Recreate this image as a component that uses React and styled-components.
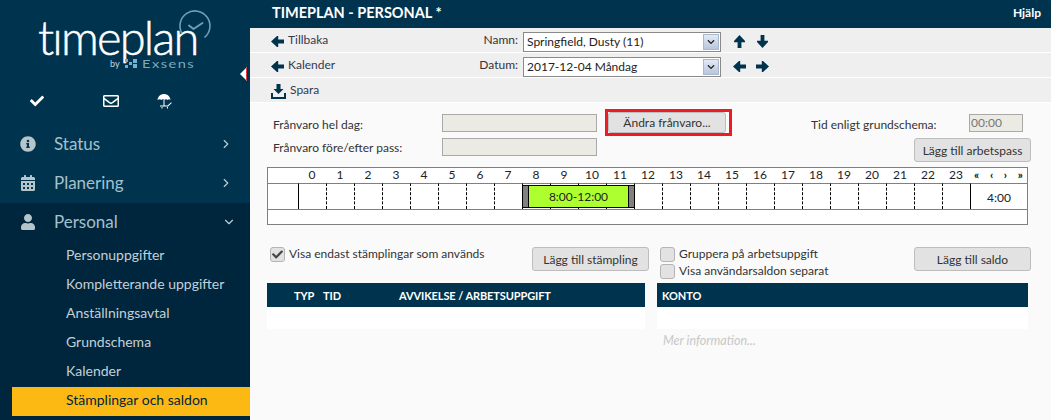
import React from "react";
import styled, { createGlobalStyle } from "styled-components";
import { FaCheck, FaRegEnvelope, FaInfoCircle, FaCalendarAlt, FaUser, FaChevronDown } from "react-icons/fa";
import { ChevronRight, ChevronDown } from "lucide-react";

const GlobalStyle = createGlobalStyle`
  html, body { margin: 0; padding: 0; background: #fafafa; }
  body { font-family: Lato, "Open Sans", sans-serif; color: #333; }
  * { box-sizing: border-box; }
`;

const Page = styled.div`
  position: relative;
  display: flex;
  width: 1051px;
  height: 420px;
  overflow: hidden;
`;

/* sidebar */
const Sidebar = styled.aside`
  display: flex;
  flex-direction: column;
  flex: 0 0 250px;
  background: #00344e;
`;

const Brand = styled.div`
  position: relative;
  height: 87px;
`;

const Wordmark = styled.div`
  position: absolute;
  left: 38px;
  top: 22px;
  font-size: 47px;
  line-height: 30px;
  font-weight: 300;
  color: #fff;
  letter-spacing: -1.8px;
  -webkit-text-stroke: 0.5px #fff;
`;

const ByLine = styled.div`
  position: absolute;
  left: 110px;
  top: 58px;
  display: flex;
  align-items: center;
  gap: 5px;
  height: 11px;
  font-size: 9px;
  color: #c5d5dd;
`;

const Exsens = styled.span`
  font-size: 12px;
  letter-spacing: 1.2px;
  color: #7fa8bd;
  transform: scaleX(1.22);
  transform-origin: left center;
`;

const ClockMark = styled.svg`
  position: absolute;
  left: 178px;
  top: 9px;
`;

const QuickIcons = styled.div`
  display: grid;
  grid-template-columns: 73px 54px 30px;
  align-items: center;
  height: 38px;
  padding: 0 0 10px 30px;
  color: #fff;
`;

const NavItem = styled.div`
  display: flex;
  align-items: center;
  height: 39px;
  padding: 0 16px 2px 20px;
  font-size: 17px;
  color: #a4c0cd;
  background: ${(p) => (p.$dark ? "#00263e" : "transparent")};
  > svg { flex: 0 0 16px; color: #b6c4cb; font-size: 16px; }
`;

const NavLabel = styled.span`
  flex: 1;
  margin-left: 18px;
`;

const NavChevron = styled.span`
  display: flex;
  color: #b9ced8;
  margin-right: ${(p) => (p.$open ? "-2px" : "1px")};
`;

const SubMenu = styled.div`
  flex: 1;
  background: #00263e;
  padding-left: 12px;
`;

const SubItem = styled.div`
  height: 29px;
  padding-left: 54px;
  font-size: 14px;
  line-height: 26px;
  color: ${(p) => (p.$active ? "#00263e" : "#c3d0d6")};
  background: ${(p) => (p.$active ? "#fdb913" : "transparent")};
`;

const CollapseTab = styled.div`
  position: absolute;
  left: 240px;
  top: 67px;
  width: 7px;
  height: 14px;
  background: #fff;
  clip-path: polygon(0 50%, 100% 0, 100% 100%);
  border-right: 1px solid #e03a3a;
`;

/* main area */
const Main = styled.main`
  flex: 1;
  min-width: 0;
  display: flex;
  flex-direction: column;
`;

const TopBar = styled.header`
  display: flex;
  justify-content: space-between;
  align-items: center;
  height: 28px;
  padding: 0 10px 3px 22px;
  background: #00344e;
  color: #fff;
`;

const PageTitle = styled.div`
  font-size: 14.5px;
  font-weight: 700;
`;

const HelpLink = styled.div`
  font-size: 12px;
  font-weight: 700;
`;

const ToolRow = styled.div`
  display: grid;
  grid-template-columns: 200px 47px 203px auto;
  align-items: center;
  height: 25px;
  padding-left: 21px;
  background: #efefef;
  border-bottom: 1px solid #fff;
`;

const ToolLink = styled.div`
  display: flex;
  align-items: center;
  gap: 4px;
  font-size: 12px;
  color: #333a50;
  svg { margin-top: 3px; }
  span { margin-bottom: 2px; }
`;

const ToolLabel = styled.div`
  margin-bottom: 2px;
  text-align: right;
  font-size: 12px;
  color: #333;
`;

const SelectBox = styled.div`
  display: flex;
  align-items: center;
  justify-content: space-between;
  height: 20px;
  margin: 3px 0 0 5px;
  padding: 1px 1px 1px 3px;
  background: #fff;
  border: 1px solid #8a8a8a;
  font-size: 12px;
  color: #222;
`;

const SelectArrow = styled.span`
  display: flex;
  align-items: center;
  justify-content: center;
  width: 16px;
  height: 16px;
  background: linear-gradient(#e3e9f4, #b9c6dc);
  border: 1px solid #a9b7cf;
  font-size: 8px;
  color: #222;
`;

const ArrowPair = styled.div`
  display: flex;
  gap: 10px;
  padding: 3px 0 0 12px;
`;

const Content = styled.div`
  flex: 1;
  padding: 6px 20px 0 17px;
  background: #fafafa;
`;

const FormGrid = styled.div`
  display: grid;
  grid-template-columns: 175px 155px 8px 127px 1fr;
  grid-template-rows: 27px 31px;
  height: 58px;
`;

const FieldLabel = styled.div`
  padding: ${(p) => (p.$second ? "4px" : "8px")} 0 0 6px;
  font-size: 12px;
  line-height: 16px;
  color: #333;
`;

const ReadonlyInput = styled.div`
  width: ${(p) => p.$width || "155px"};
  height: 18px;
  margin-top: ${(p) => p.$top || "5px"};
  background: #ebebe4;
  border: 1px solid #a9a9a9;
  font-size: 12px;
  line-height: 15px;
  color: #777;
  padding-left: 1px;
`;

const Highlight = styled.div`
  padding: 0 1px 0 0;
  height: 27px;
  border: 3px solid #ed1c24;
  display: flex;
`;

const Button = styled.button`
  width: ${(p) => p.$width || "117px"};
  height: ${(p) => p.$height || "24px"};
  padding: 0;
  background: #e2e2e2;
  border: 1px solid #bdbdbd;
  border-radius: 3px;
  font-family: inherit;
  font-size: 12px;
  color: #333;
`;

const RightCol = styled.div`
  display: flex;
  justify-content: space-between;
  padding: 8px 8px 0 79px;
  font-size: 12px;
  line-height: 16px;
  color: #333;
  > div { margin-top: -3px; }
`;

const RightButton = styled.div`
  display: flex;
  justify-content: flex-end;
  padding-top: 2px;
`;

const Timeline = styled.div`
  width: 761px;
  height: 58px;
  margin-bottom: 22px;
  border: 1px solid #808080;
  background: #fff;
`;

const TimeGrid = styled.div`
  display: grid;
  grid-template-columns: 30px repeat(24, 28px) 1fr;
  grid-template-rows: 15px 26px;
  border-bottom: 1px solid #808080;
`;

const HourLabel = styled.div`
  grid-row: 1;
  text-align: center;
  font-size: 12px;
  line-height: 14px;
  color: #222;
`;

const Pager = styled.div`
  grid-row: 1;
  display: flex;
  justify-content: space-between;
  padding: 0 4px;
  font-size: 11px;
  line-height: 14px;
  font-weight: 900;
  color: #222;
`;

const Slot = styled.div`
  grid-row: 2;
  grid-column: ${(p) => p.$col};
  border-top: 1px solid #808080;
  border-left: ${(p) => (p.$line === "none" ? "none" : `1px ${p.$line} #000`)};
  text-align: center;
  font-size: 12px;
  line-height: 28px;
  color: #222;
`;

const Shift = styled.div`
  grid-row: 2;
  grid-column: 10 / span 4;
  z-index: 1;
  display: flex;
  margin: 2px -1px 1px 0;
  padding: 0 5px;
  border: 1px solid #000;
  background: #808080;
`;

const ShiftBody = styled.div`
  flex: 1;
  background: #adff2f;
  border: solid #000;
  border-width: 0 1px;
  text-align: center;
  font-size: 12px;
  line-height: 22px;
  color: #222;
`;

const Panels = styled.div`
  display: grid;
  grid-template-columns: 378px 371px;
  column-gap: 12px;
`;

const OptionRow = styled.div`
  display: flex;
  justify-content: space-between;
  height: 36px;
  width: ${(p) => p.$width || "auto"};
`;

const OptionList = styled.div`
  display: flex;
  flex-direction: column;
  gap: 2px;
  padding-left: 3px;
`;

const CheckOption = styled.label`
  display: flex;
  gap: 4px;
  font-size: 12px;
  line-height: 14px;
  color: #333;
`;

const CheckBox = styled.span`
  display: flex;
  align-items: center;
  justify-content: center;
  width: 15px;
  height: 15px;
  background: #e2e2e2;
  border: 1px solid #b4b4b4;
  border-radius: 3px;
  font-size: 11px;
  color: #444;
`;

const TableHead = styled.div`
  display: flex;
  align-items: center;
  height: 24px;
  background: #00344e;
  color: #fff;
  font-size: 11px;
  font-weight: 700;
  letter-spacing: -0.1px;
`;

const HeadCell = styled.span`
  width: ${(p) => p.$width};
  padding-left: ${(p) => p.$pad || "0"};
`;

const TableBody = styled.div`
  height: 22px;
  background: #fff;
`;

const MoreInfo = styled.div`
  padding: 4px 0 0 6px;
  font-size: 12.5px;
  font-style: italic;
  color: #c8c8c8;
`;

/* small drawn icons, the toolbar glyphs are not in the icon packs */
const ArrowIcon = ({ dir = "left", size = 13 }) => {
  const rotate = { left: 0, up: 90, right: 180, down: 270 }[dir];
  return (
    <svg width={size} height={size} viewBox="0 0 13 13" fill="#00344e">
      <path transform={`rotate(${rotate} 6.5 6.5)`} d="M0 6.5 6 1h1.2v3.6H13v3.8H7.2V12H6z" />
    </svg>
  );
};

const SaveIcon = () => (
  <svg width="15" height="15" viewBox="0 0 15 15" fill="#00344e">
    <path d="M5.5 0h4v5h3l-5 5-5-5h3z" />
    <path d="M0 9h2v4h11V9h2v6H0z" />
  </svg>
);

const BeachIcon = () => (
  <svg width="16" height="16" viewBox="0 0 16 16" fill="#fff">
    <path d="M0.5 7C1 3 4 1 7 1s6 2 6.5 6c-1-1-2-1-3 0-.8-1-2.2-1-3 0-.9-1-2.3-1-3 0-1.1-1-2.200-1-4 0z" />
    <path d="M6.500 7h1v6h-1z" />
    <path d="M3 12.500h7.500l3.700-3.200.6.600-3.800 3.600H3zM4.500 14h1v1.500h-1zM10 14h1v1.500h-1z" />
  </svg>
);

const hours = Array.from({ length: 24 }, (_, i) => i);

const App = () => (
  <Page>
    <GlobalStyle />
    <Sidebar>
      <Brand>
        <Wordmark>tımeplan</Wordmark>
        <ClockMark width="34" height="34" viewBox="0 0 34 34" fill="none" stroke="#6ba0ba" strokeWidth="1.6">
          <path d="M4 24.500A15 15 0 1 1 26.500 28.500" />
          <path d="M11 16.500l4.500 3.500 9-6" strokeWidth="2" strokeLinecap="round" strokeLinejoin="round" />
        </ClockMark>
        <ByLine>
          by
          <svg width="12" height="9" viewBox="0 0 12 9" fill="#6fb1d6">
            <path d="M0 0h3v3H0zM4 3h3v3H4zM8 0h4v4H8zM8 5h4v4H8zM0 6h3v3H0z" />
          </svg>
          <Exsens>Exsens</Exsens>
        </ByLine>
      </Brand>
      <QuickIcons>
        <FaCheck size={14} />
        <FaRegEnvelope size={16} />
        <BeachIcon />
      </QuickIcons>
      <NavItem>
        <FaInfoCircle />
        <NavLabel>Status</NavLabel>
        <NavChevron><ChevronRight size={14} strokeWidth={2} /></NavChevron>
      </NavItem>
      <NavItem>
        <FaCalendarAlt />
        <NavLabel>Planering</NavLabel>
        <NavChevron><ChevronRight size={14} strokeWidth={2} /></NavChevron>
      </NavItem>
      <NavItem $dark>
        <FaUser />
        <NavLabel>Personal</NavLabel>
        <NavChevron $open><ChevronDown size={14} strokeWidth={2} /></NavChevron>
      </NavItem>
      <SubMenu>
        <SubItem>Personuppgifter</SubItem>
        <SubItem>Kompletterande uppgifter</SubItem>
        <SubItem>Anställningsavtal</SubItem>
        <SubItem>Grundschema</SubItem>
        <SubItem>Kalender</SubItem>
        <SubItem $active>Stämplingar och saldon</SubItem>
      </SubMenu>
    </Sidebar>
    <CollapseTab />

    <Main>
      <TopBar>
        <PageTitle>TIMEPLAN - PERSONAL *</PageTitle>
        <HelpLink>Hjälp</HelpLink>
      </TopBar>

      <ToolRow>
        <ToolLink><ArrowIcon /><span>Tillbaka</span></ToolLink>
        <ToolLabel>Namn:</ToolLabel>
        <SelectBox>Springfield, Dusty (11)<SelectArrow><FaChevronDown /></SelectArrow></SelectBox>
        <ArrowPair><ArrowIcon dir="up" /><ArrowIcon dir="down" /></ArrowPair>
      </ToolRow>
      <ToolRow>
        <ToolLink><ArrowIcon /><span>Kalender</span></ToolLink>
        <ToolLabel>Datum:</ToolLabel>
        <SelectBox>2017-12-04 Måndag<SelectArrow><FaChevronDown /></SelectArrow></SelectBox>
        <ArrowPair><ArrowIcon dir="left" /><ArrowIcon dir="right" /></ArrowPair>
      </ToolRow>
      <ToolRow>
        <ToolLink><SaveIcon /><span>Spara</span></ToolLink>
      </ToolRow>

      <Content>
        <FormGrid>
          <FieldLabel>Frånvaro hel dag:</FieldLabel>
          <ReadonlyInput />
          <span />
          <Highlight><Button $width="118px" $height="100%">Ändra frånvaro...</Button></Highlight>
          <RightCol>
            Tid enligt grundschema:
            <ReadonlyInput $width="54px" $top="0">00:00</ReadonlyInput>
          </RightCol>
          <FieldLabel $second>Frånvaro före/efter pass:</FieldLabel>
          <ReadonlyInput $top="2px" />
          <span />
          <span />
          <RightButton><Button>Lägg till arbetspass</Button></RightButton>
        </FormGrid>

        <Timeline>
          <TimeGrid>
            <HourLabel />
            {hours.map((h) => <HourLabel key={h}>{h}</HourLabel>)}
            <Pager><span>«</span><span>‹</span><span>›</span><span>»</span></Pager>
            <Slot $col={1} $line="none" />
            {hours.map((h) => <Slot key={h} $col={h + 2} $line={h === 0 ? "solid" : "dashed"} />)}
            <Slot $col={26} $line="solid">4:00</Slot>
            <Shift><ShiftBody>8:00-12:00</ShiftBody></Shift>
          </TimeGrid>
        </Timeline>

        <Panels>
          <div>
            <OptionRow $width="382px">
              <OptionList>
                <CheckOption><CheckBox><FaCheck /></CheckBox>Visa endast stämplingar som används</CheckOption>
              </OptionList>
              <Button>Lägg till stämpling</Button>
            </OptionRow>
            <TableHead>
              <HeadCell $width="56px" $pad="27px">TYP</HeadCell>
              <HeadCell $width="76px">TID</HeadCell>
              <HeadCell>AVVIKELSE / ARBETSUPPGIFT</HeadCell>
            </TableHead>
            <TableBody />
          </div>
          <div>
            <OptionRow $width="374px">
              <OptionList>
                <CheckOption><CheckBox />Gruppera på arbetsuppgift</CheckOption>
                <CheckOption><CheckBox />Visa användarsaldon separat</CheckOption>
              </OptionList>
              <Button>Lägg till saldo</Button>
            </OptionRow>
            <TableHead><HeadCell $pad="5px">KONTO</HeadCell></TableHead>
            <TableBody />
            <MoreInfo>Mer information...</MoreInfo>
          </div>
        </Panels>
      </Content>
    </Main>
  </Page>
);

export default App;
